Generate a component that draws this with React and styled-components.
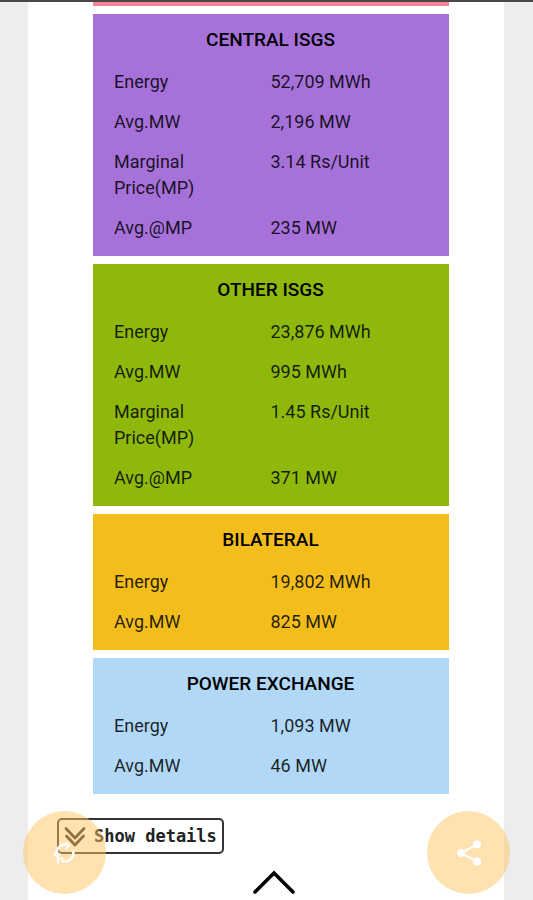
import React from "react";
import styled, { createGlobalStyle } from "styled-components";

const sections = [
  {
    title: "CENTRAL ISGS",
    color: "#a672da",
    rows: [
      ["Energy", "52,709 MWh"],
      ["Avg.MW", "2,196 MW"],
      ["Marginal Price(MP)", "3.14 Rs/Unit"],
      ["Avg.@MP", "235 MW"],
    ],
  },
  {
    title: "OTHER ISGS",
    color: "#8eb90c",
    rows: [
      ["Energy", "23,876 MWh"],
      ["Avg.MW", "995 MWh"],
      ["Marginal Price(MP)", "1.45 Rs/Unit"],
      ["Avg.@MP", "371 MW"],
    ],
  },
  {
    title: "BILATERAL",
    color: "#f3be1b",
    rows: [
      ["Energy", "19,802 MWh"],
      ["Avg.MW", "825 MW"],
    ],
  },
  {
    title: "POWER EXCHANGE",
    color: "#b1d8f7",
    rows: [
      ["Energy", "1,093 MW"],
      ["Avg.MW", "46 MW"],
    ],
  },
];

function SourceCard({ title, color, rows }) {
  return (
    <Card $color={color}>
      <h2>{title}</h2>
      <table aria-label={title}>
        <tbody>
          {rows.map(([label, value]) => (
            <tr key={label}>
              <th scope="row">{label}</th>
              <td>{value}</td>
            </tr>
          ))}
        </tbody>
      </table>
    </Card>
  );
}

function App() {
  return (
    <>
      <GlobalStyle />
      <Page>
        <Cards>
          <PreviousCard />
          {sections.map((s) => (
            <SourceCard key={s.title} {...s} />
          ))}
        </Cards>
        <DetailsButton type="button">
          <svg width="22" height="22" viewBox="0 0 22 22" fill="none" stroke="#222" strokeWidth="2.8" strokeLinecap="round" strokeLinejoin="round">
            <path d="M2 3.5 L11 13 L20 3.5" />
            <path d="M2.5 11 L11 20 L19.5 11" />
          </svg>
          Show details
        </DetailsButton>
        <UpButton type="button" aria-label="Scroll up">
          <svg width="44" height="25" viewBox="0 0 44 25" fill="none" stroke="#000" strokeWidth="3.6" strokeLinecap="round">
            <path d="M3 22 L22 3 L41 22" />
          </svg>
        </UpButton>
      </Page>
      <FloatingButton type="button" aria-label="Refresh" $side="left">
        <svg width="24" height="24" viewBox="0 0 24 24" fill="none" stroke="#fff" strokeWidth="2.6">
          <path d="M4 14.5 A8.4 8.4 0 0 1 15.5 4.4" />
          <path d="M20 9.5 A8.4 8.4 0 0 1 8.5 19.6" />
          <path d="M12.5 1 L16.5 4.8 L12.5 8" strokeWidth="2" />
          <path d="M5 22.5 L5 17.5 L10.5 17.5" strokeWidth="2" />
          <path d="M1 12.5 L4 15.5 L7 12.5" strokeWidth="2" />
        </svg>
      </FloatingButton>
      <FloatingButton type="button" aria-label="Share" $side="right">
        <svg width="26" height="26" viewBox="0 0 26 26" fill="#fff" stroke="#fff" strokeWidth="2">
          <path d="M21 4.5 L5 13 L21 21.5" fill="none" />
          <circle cx="21" cy="4.5" r="3" />
          <circle cx="5" cy="13" r="3" />
          <circle cx="21" cy="21.5" r="3" />
        </svg>
      </FloatingButton>
    </>
  );
}

const GlobalStyle = createGlobalStyle`
  * {
    box-sizing: border-box;
  }
  body {
    margin: 0;
    background: #ededed;
    border-top: 2px solid #474747;
    font-family: Roboto, "Liberation Sans", sans-serif;
    color: rgba(0, 0, 0, 0.85);
  }
`;

const Page = styled.main`
  display: flex;
  flex-direction: column;
  min-height: calc(100vh - 2px);
  margin: 0 29px 0 28px;
  background: #fff;
`;

const Cards = styled.div`
  display: flex;
  flex-direction: column;
  gap: 8px;
  padding: 0 55px 0 65px;
`;

const PreviousCard = styled.div`
  height: 4px;
  background: #f2839b;
`;

const Card = styled.section`
  background: ${(props) => props.$color};
  padding: 0 22px 8px 21px;
  h2 {
    margin: 0;
    padding-top: 13px;
    height: 48px;
    font-size: 19px;
    line-height: 26px;
    font-weight: 500;
    text-align: center;
    color: #000;
  }
  table {
    width: 100%;
    table-layout: fixed;
    border-collapse: collapse;
  }
  th,
  td {
    padding: 7px 0;
    font-size: 18px;
    line-height: 26px;
    font-weight: 400;
    text-align: left;
    vertical-align: top;
  }
  th {
    padding-right: 28px;
  }
`;

const DetailsButton = styled.button`
  align-self: flex-start;
  display: flex;
  align-items: center;
  gap: 8px;
  height: 36px;
  margin: 24px 0 0 29px;
  padding: 0 5px;
  border: 2px solid #333;
  border-radius: 5px;
  background: #fff;
  color: #222;
  font-family: "DejaVu Sans Mono", monospace;
  font-size: 17px;
  font-weight: 700;
  white-space: nowrap;
`;

const UpButton = styled.button`
  align-self: center;
  display: flex;
  margin: 16px 0 0 15px;
  padding: 0;
  border: 0;
  background: none;
`;

const FloatingButton = styled.button`
  position: fixed;
  bottom: 6px;
  ${(props) => props.$side}: 23px;
  display: flex;
  align-items: center;
  justify-content: center;
  width: 83px;
  height: 83px;
  padding: 0;
  border: 0;
  border-radius: 50%;
  background: rgba(255, 198, 98, 0.5);
`;

export default App;
